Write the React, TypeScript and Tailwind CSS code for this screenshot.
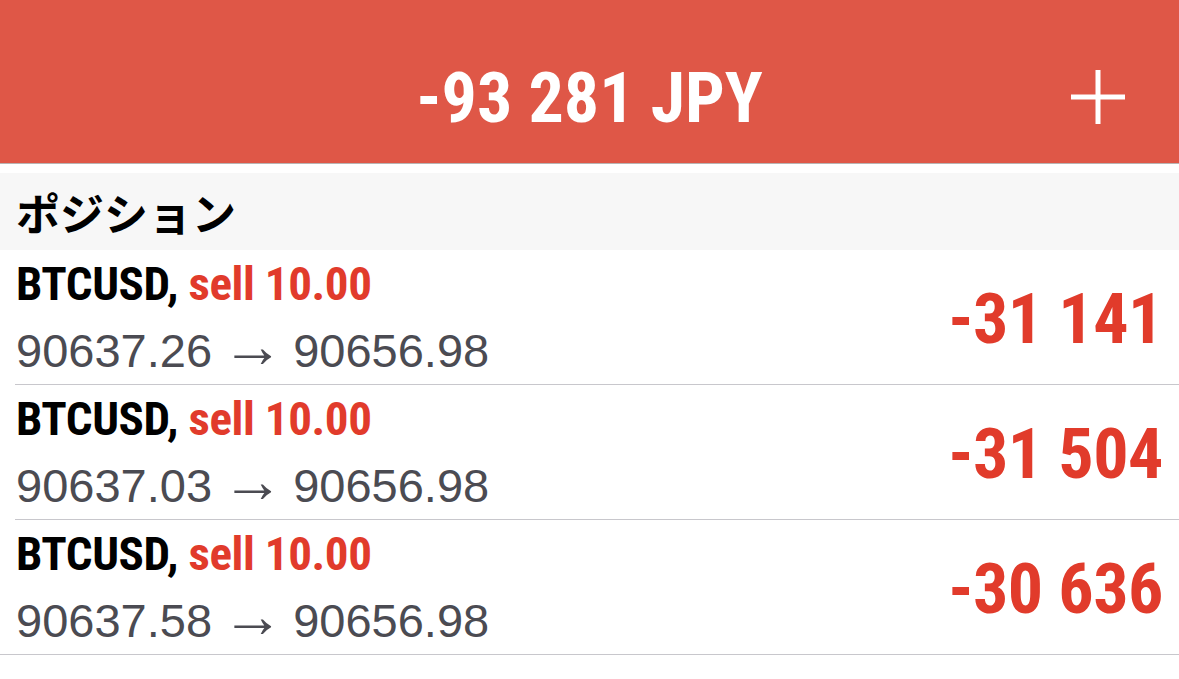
const positions = [
  { symbol: "BTCUSD", side: "sell 10.00", open: "90637.26", current: "90656.98", profit: "-31 141" },
  { symbol: "BTCUSD", side: "sell 10.00", open: "90637.03", current: "90656.98", profit: "-31 504" },
  { symbol: "BTCUSD", side: "sell 10.00", open: "90637.58", current: "90656.98", profit: "-30 636" },
];

function PlusIcon() {
  return (
    <svg width="54" height="54" viewBox="0 0 54 54" fill="none">
      <path d="M27 0v54M0 27h54" stroke="#fff" strokeWidth="5" />
    </svg>
  );
}

export default function App() {
  return (
    <div className="w-[1179px] h-[679px] bg-white overflow-hidden">
      {/* header */}
      <div className="h-[164px] bg-[#df5747] border-b border-[#b9b4b3] grid grid-cols-[1fr_auto_1fr] items-start">
        <div />
        <div className="font-['Roboto',sans-serif] [font-stretch:75%] font-bold text-[70px] leading-none text-white pt-[63px]">
          -93 281 JPY
        </div>
        <div className="justify-self-end pr-[54px] pt-[70px]">
          <PlusIcon />
        </div>
      </div>

      <div className="h-[9px] bg-white" />

      {/* section title */}
      <div className="h-[77px] bg-[#f7f7f7] flex items-center px-4">
        <span className="font-['Noto_Sans_CJK_JP',sans-serif] font-bold text-[44px] leading-none text-black">
          ポジション
        </span>
      </div>

      {/* positions */}
      {positions.map((p, i) => (
        <div key={i}>
          <div className="h-[134px] flex items-center justify-between pl-4 pr-4">
            <div className="flex flex-col">
              <div className="font-['Roboto',sans-serif] [font-stretch:75%] font-bold text-[47px] tracking-[-0.4px] leading-[62px] text-black">
                {p.symbol}, <span className="text-[#e13b2b]">{p.side}</span>
              </div>
              <div className="font-['Liberation_Sans',sans-serif] text-[47px] leading-[62px] text-[#4b4b52] whitespace-nowrap">
                {p.open} <span className="text-[62px] leading-none mx-[-3.5px]">→</span> {p.current}
              </div>
            </div>
            <div className="font-['Roboto',sans-serif] [font-stretch:75%] font-bold text-[70px] tracking-[-0.5px] leading-none text-[#e13b2b] pt-[4px]">
              {p.profit}
            </div>
          </div>
          <div className={i < positions.length - 1 ? "ml-[15px] h-px bg-[#c8c7cc]" : "h-px bg-[#c8c7cc]"} />
        </div>
      ))}
    </div>
  );
}
